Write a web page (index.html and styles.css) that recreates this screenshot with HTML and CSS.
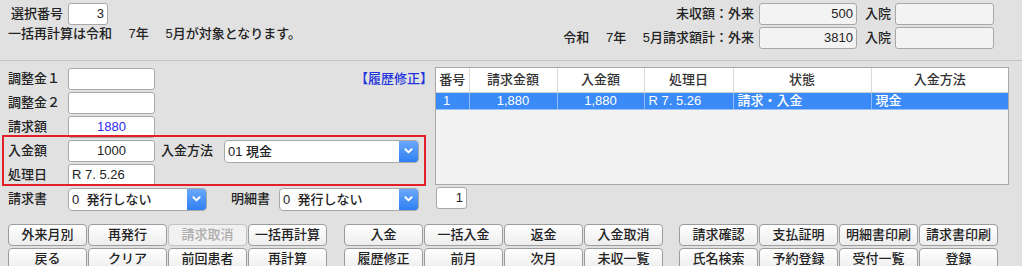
FILE: index.html
```html
<!DOCTYPE html>
<html lang="ja">
<head>
<meta charset="utf-8">
<title>入金処理</title>
<link rel="stylesheet" href="styles.css">
</head>
<body>
<div class="page">
  <header class="top">
    <div class="top-left">
      <div class="row">
        <span class="lbl ind">選択番号</span>
        <span class="field w40 right">3</span>
      </div>
      <div class="note">一括再計算は令和　 7年　 5月が対象となります。</div>
    </div>
    <div class="top-right">
      <span class="rlbl">未収額：外来</span>
      <span class="field ro right">500</span>
      <span class="rlbl2">入院</span>
      <span class="field ro"></span>
      <span class="rlbl">令和　 7年　 5月請求額計：外来</span>
      <span class="field ro right">3810</span>
      <span class="rlbl2">入院</span>
      <span class="field ro"></span>
    </div>
  </header>

  <main class="mid">
    <section class="form">
      <div class="frow">
        <span class="lbl">調整金１</span>
        <span class="field w87"></span>
        <span class="link">【履歴修正】</span>
      </div>
      <div class="frow">
        <span class="lbl">調整金２</span>
        <span class="field w87"></span>
      </div>
      <div class="frow">
        <span class="lbl">請求額</span>
        <span class="field w87 center blue">1880</span>
      </div>
      <div class="frow">
        <span class="lbl">入金額</span>
        <span class="field w87 center">1000</span>
        <span class="lbl2">入金方法</span>
        <span class="select s195">
          <span class="val">01 現金</span>
          <span class="sbtn"><svg width="9" height="6" viewBox="0 0 9 6"><path d="M1.4 1.3 L4.5 4.4 L7.6 1.3" fill="none" stroke="#fff" stroke-width="2" stroke-linecap="round" stroke-linejoin="round"/></svg></span>
        </span>
      </div>
      <div class="frow">
        <span class="lbl">処理日</span>
        <span class="field w87">R 7. 5.26</span>
      </div>
      <div class="frow">
        <span class="lbl">請求書</span>
        <span class="select s139">
          <span class="val">0&nbsp; 発行しない</span>
          <span class="sbtn"><svg width="9" height="6" viewBox="0 0 9 6"><path d="M1.4 1.3 L4.5 4.4 L7.6 1.3" fill="none" stroke="#fff" stroke-width="2" stroke-linecap="round" stroke-linejoin="round"/></svg></span>
        </span>
        <span class="lbl3">明細書</span>
        <span class="select s140">
          <span class="val">0&nbsp; 発行しない</span>
          <span class="sbtn"><svg width="9" height="6" viewBox="0 0 9 6"><path d="M1.4 1.3 L4.5 4.4 L7.6 1.3" fill="none" stroke="#fff" stroke-width="2" stroke-linecap="round" stroke-linejoin="round"/></svg></span>
        </span>
      </div>
      <div class="highlight"></div>
    </section>

    <section class="list">
      <div class="tablebox">
        <table class="grid">
          <colgroup>
            <col class="c1"><col class="c2"><col class="c3"><col class="c4"><col class="c5"><col class="c6">
          </colgroup>
          <thead>
            <tr><th>番号</th><th>請求金額</th><th>入金額</th><th>処理日</th><th>状態</th><th>入金方法</th></tr>
          </thead>
          <tbody>
            <tr class="sel"><td>1</td><td class="amt">1,880</td><td class="amt">1,880</td><td>R 7. 5.26</td><td>請求・入金</td><td>現金</td></tr>
          </tbody>
        </table>
      </div>
      <span class="field pager right">1</span>
    </section>
  </main>

  <footer class="buttons">
    <div class="bgroup">
      <button class="btn">外来月別</button>
      <button class="btn">再発行</button>
      <button class="btn" disabled>請求取消</button>
      <button class="btn">一括再計算</button>
      <button class="btn">戻る</button>
      <button class="btn">クリア</button>
      <button class="btn">前回患者</button>
      <button class="btn">再計算</button>
    </div>
    <div class="bgroup">
      <button class="btn">入金</button>
      <button class="btn">一括入金</button>
      <button class="btn">返金</button>
      <button class="btn">入金取消</button>
      <button class="btn">履歴修正</button>
      <button class="btn">前月</button>
      <button class="btn">次月</button>
      <button class="btn">未収一覧</button>
    </div>
    <div class="bgroup g3">
      <button class="btn">請求確認</button>
      <button class="btn">支払証明</button>
      <button class="btn">明細書印刷</button>
      <button class="btn">請求書印刷</button>
      <button class="btn">氏名検索</button>
      <button class="btn">予約登録</button>
      <button class="btn">受付一覧</button>
      <button class="btn">登録</button>
    </div>
  </footer>
</div>
</body>
</html>
```

FILE: styles.css
```css
* { box-sizing: border-box; }

html, body {
  margin: 0;
  padding: 0;
}

body {
  width: 1022px;
  height: 266px;
  overflow: hidden;
  background: #e1e1e1;
  color: #222;
  font-family: "Liberation Sans", "Noto Sans CJK JP", sans-serif;
  font-size: 13px;
  font-weight: 500;
  line-height: 16px;
}

.page {
  width: 1022px;
  height: 266px;
}

/* ---------- top ---------- */
.top {
  display: flex;
  justify-content: space-between;
  height: 61px;
  padding: 3px 28px 0 8px;
  border-bottom: 1px solid #c4c4c4;
}

.row {
  display: flex;
  align-items: center;
  height: 22px;
}

.lbl {
  width: 60px;
  flex: none;
  white-space: nowrap;
}

.lbl.ind { padding-left: 3px; }

.note {
  margin-top: 1px;
  line-height: 16px;
  white-space: pre;
}

.top-right {
  display: grid;
  grid-template-columns: auto 98px auto 99px;
  grid-auto-rows: 22px;
  row-gap: 2px;
  align-items: center;
}

.rlbl {
  text-align: right;
  padding-right: 5px;
  white-space: pre;
}

.rlbl2 {
  padding: 0 4px 0 8px;
  white-space: nowrap;
}

/* ---------- fields ---------- */
.field {
  display: block;
  height: 22px;
  border: 1px solid #a8a8a8;
  border-radius: 3px;
  background: #fff;
  padding: 0 3px;
  line-height: 20px;
  white-space: pre;
  overflow: hidden;
}

.field.ro { background: #f3f3f3; }
.field.right { text-align: right; }
.field.center { text-align: center; }
.field.blue { color: #2a2aee; }
.w40 { width: 40px; }
.w87 { width: 87px; flex: none; }

/* ---------- middle ---------- */
.mid {
  display: flex;
  gap: 6px;
  padding: 7px 13px 0 8px;
  height: 156px;
}

.form {
  position: relative;
  width: 421px;
  flex: none;
  display: flex;
  flex-direction: column;
  gap: 2px;
}

.frow {
  display: flex;
  align-items: center;
  height: 22px;
}

.link {
  margin-left: auto;
  color: #2233dd;
  white-space: nowrap;
  margin-right: -4px;
}

.lbl2 {
  width: 63px;
  margin-left: 6px;
  flex: none;
}

.lbl3 {
  width: 48px;
  margin-left: 24px;
  flex: none;
}

.select {
  display: flex;
  height: 23px;
  border: 1px solid #a8a8a8;
  border-radius: 4px;
  background: #fff;
  overflow: hidden;
  flex: none;
}

.s195 { width: 195px; }
.s139 { width: 139px; }
.s140 { width: 140px; }

.select .val {
  flex: 1;
  padding-left: 3px;
  line-height: 21px;
  white-space: pre;
}

.select .sbtn {
  width: 19px;
  flex: none;
  display: flex;
  align-items: center;
  justify-content: center;
  background: linear-gradient(#6aa8fb, #2f7ff2);
}

.highlight {
  position: absolute;
  left: -6px;
  top: 67px;
  width: 424px;
  height: 51px;
  border: 2px solid #e3202a;
  pointer-events: none;
}

.list {
  width: 574px;
  flex: none;
  margin-top: -1px;
}

.tablebox {
  height: 118px;
  border: 1px solid #a9a9a9;
  background: #f2f2f2;
  overflow: hidden;
}

.grid {
  width: 100%;
  border-collapse: collapse;
  table-layout: fixed;
}

.c1 { width: 33px; }
.c2 { width: 88px; }
.c3 { width: 87px; }
.c4 { width: 89px; }
.c5 { width: 138px; }
.c6 { width: auto; }

.grid th {
  height: 24px;
  background: #fff;
  font-weight: 500;
  color: #333;
  text-align: center;
  border-right: 1px solid #dadada;
  border-bottom: 1px solid #cfcfcf;
  padding: 0;
}

.grid th:last-child { border-right: none; }

.grid tr.sel td {
  height: 17px;
  background: #3a8af7;
  color: #fff;
  padding: 0 4px;
  border-right: 1px solid #8fbaf6;
  border-bottom: 1px solid #9cc0f3;
  white-space: nowrap;
  line-height: 16px;
}

.grid tr.sel td:first-child { padding-left: 7px; }
.grid tr.sel td:last-child { border-right: none; }
.grid tr.sel td.amt { text-align: center; }

.pager {
  width: 31px;
  margin-top: 2px;
  margin-left: 1px;
}

/* ---------- buttons ---------- */
.buttons {
  display: flex;
  gap: 17px;
  padding: 7px 0 0 8px;
}

.bgroup {
  display: grid;
  grid-template-columns: repeat(4, 79px);
  grid-auto-rows: 22px;
  column-gap: 1px;
  row-gap: 2px;
}

.bgroup.g3 { margin-left: -1px; }

.btn {
  margin: 0;
  padding: 0;
  height: 22px;
  border: 1px solid #9c9c9c;
  border-radius: 4px;
  background: linear-gradient(#ffffff, #ededed);
  color: #222;
  font-family: "Liberation Sans", "Noto Sans CJK JP", sans-serif;
  font-size: 13px;
  font-weight: 500;
  line-height: 20px;
  white-space: nowrap;
}

.btn:disabled {
  color: #ababab;
  background: #f1f1f1;
  border-color: #c2c2c2;
}
```
